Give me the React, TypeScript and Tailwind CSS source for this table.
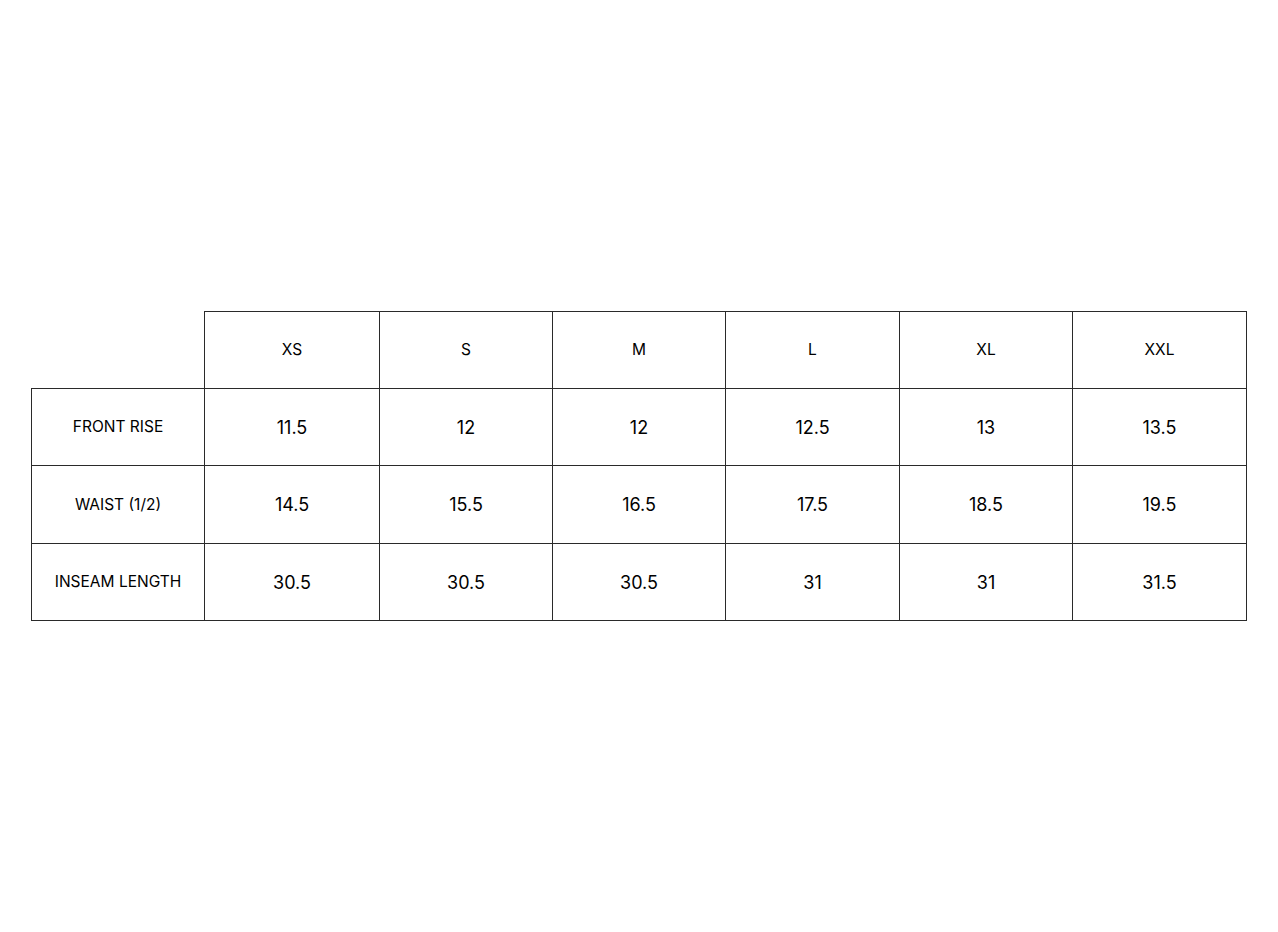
const sizes = ['XS', 'S', 'M', 'L', 'XL', 'XXL'];

const rows = [
  { label: 'FRONT RISE', values: ['11.5', '12', '12', '12.5', '13', '13.5'] },
  { label: 'WAIST (1/2)', values: ['14.5', '15.5', '16.5', '17.5', '18.5', '19.5'] },
  { label: 'INSEAM LENGTH', values: ['30.5', '30.5', '30.5', '31', '31', '31.5'] },
];

export default function App() {
  return (
    <div className="min-h-screen w-full bg-white flex items-center justify-center font-['Inter',sans-serif] text-black">
      <table className="w-[1216px] border-collapse table-fixed">
        <colgroup>
          <col className="w-[173px]" />
          <col className="w-[175px]" />
          <col className="w-[173px]" />
          <col className="w-[173px]" />
          <col className="w-[174px]" />
          <col className="w-[173px]" />
          <col />
        </colgroup>
        <thead>
          <tr className="h-[77px]">
            <th className="p-0" />
            {sizes.map((s) => (
              <th key={s} className="border border-[#2a2a2a] text-[15.5px] font-normal text-center align-middle">
                {s}
              </th>
            ))}
          </tr>
        </thead>
        <tbody>
          {rows.map((row, i) => (
            <tr key={row.label} className={i === 1 ? 'h-[78px]' : 'h-[77px]'}>
              <td className="border border-[#2a2a2a] text-[15.5px] text-center align-middle">{row.label}</td>
              {row.values.map((v, j) => (
                <td key={j} className="border border-[#2a2a2a] text-[18px] text-center align-middle">
                  {v}
                </td>
              ))}
            </tr>
          ))}
        </tbody>
      </table>
    </div>
  );
}
